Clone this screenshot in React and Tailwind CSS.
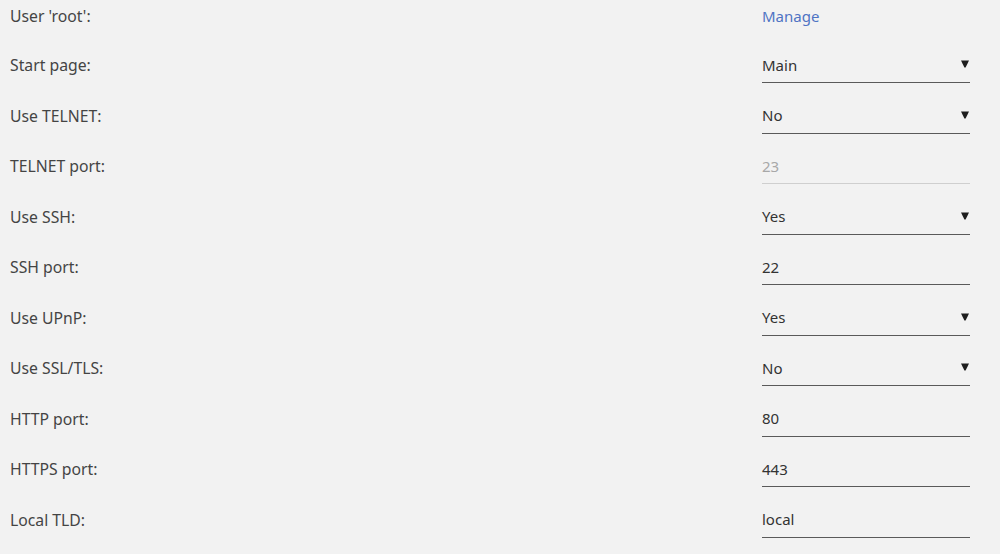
import React from 'react';

const rows = [
  { label: 'Start page:', value: 'Main', select: true },
  { label: 'Use TELNET:', value: 'No', select: true },
  { label: 'TELNET port:', value: '23', disabled: true },
  { label: 'Use SSH:', value: 'Yes', select: true },
  { label: 'SSH port:', value: '22' },
  { label: 'Use UPnP:', value: 'Yes', select: true },
  { label: 'Use SSL/TLS:', value: 'No', select: true },
  { label: 'HTTP port:', value: '80' },
  { label: 'HTTPS port:', value: '443' },
  { label: 'Local TLD:', value: 'local' },
];

const Caret = () => (
  <svg width="8" height="8" viewBox="0 0 8 8" className="mr-[1px] mb-[1px]">
    <path d="M0 0.5 H8 L4.6 7.5 H3.4 Z" fill="#1e1e1e" />
  </svg>
);

const Field = ({ value, select, disabled }) => (
  <div
    className={`w-[208px] h-[36px] flex items-center justify-between border-b text-[15px] ${
      disabled ? 'border-[#cfcfcf] text-[#a8a8a8]' : 'border-[#5a5a5a] text-[#333]'
    }`}
  >
    <span>{value}</span>
    {select && <Caret />}
  </div>
);

export default function App() {
  return (
    <div
      className="min-h-screen w-full bg-[#f2f2f2] text-[15.75px] text-[#444]"
      style={{ fontFamily: '"Noto Sans", "Open Sans", sans-serif' }}
    >
      <div className="flex items-center justify-between h-[33px] pl-[10px] pr-[30px]">
        <span className="mt-[1px]">User 'root':</span>
        <a href="#" className="w-[208px] text-[15px] text-[#4f74c4]">Manage</a>
      </div>
      <div className="pt-[7px]">
        {rows.map((r) => (
          <div key={r.label} className="flex items-center justify-between h-[50.5px] pl-[10px] pr-[30px]">
            <span className="mt-[2px]">{r.label}</span>
            <Field value={r.value} select={r.select} disabled={r.disabled} />
          </div>
        ))}
      </div>
    </div>
  );
}
